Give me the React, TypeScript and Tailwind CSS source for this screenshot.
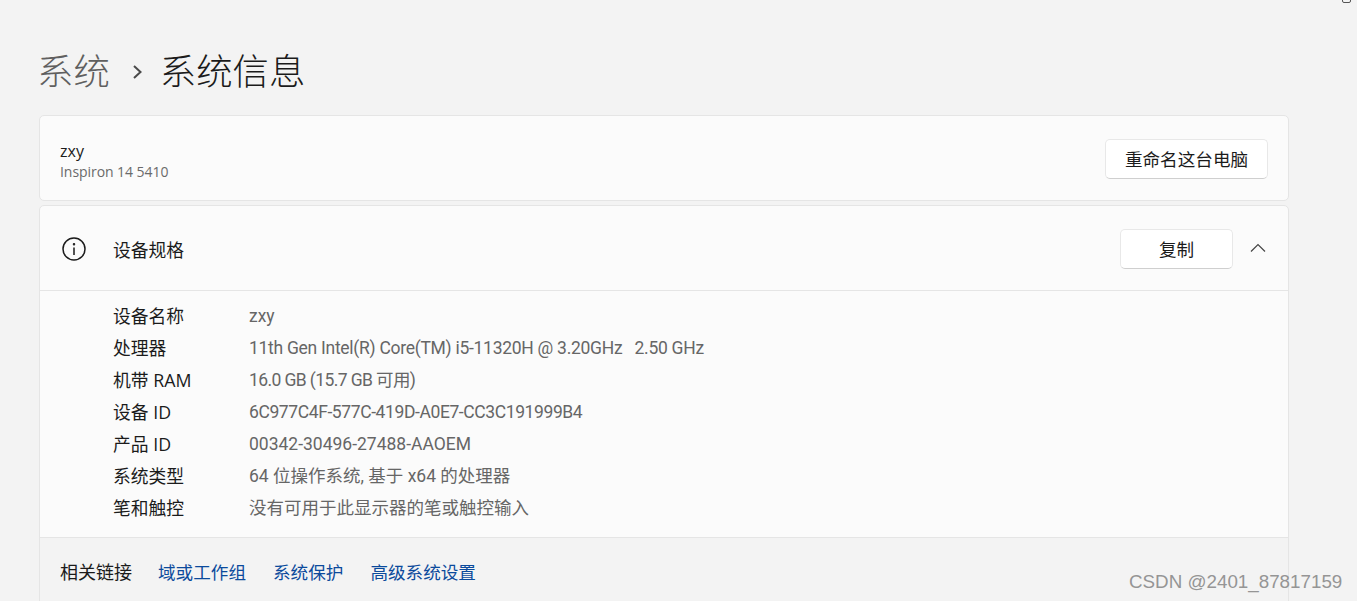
const font = '[font-family:"Open_Sans","Noto_Sans_CJK_SC",sans-serif]'
const valueFont = '[font-family:"Roboto","Noto_Sans_CJK_SC",sans-serif]'

const specs = [
  { label: '设备名称', value: 'zxy', tracking: 'tracking-normal' },
  { label: '处理器', value: '11th Gen Intel(R) Core(TM) i5-11320H @ 3.20GHz\u00a0\u00a0\u00a02.50 GHz', tracking: 'tracking-[-0.28px]' },
  { label: '机带 RAM', value: '16.0 GB (15.7 GB 可用)', tracking: 'tracking-[-0.6px]' },
  { label: '设备 ID', value: '6C977C4F-577C-419D-A0E7-CC3C191999B4', tracking: 'tracking-[-0.4px]' },
  { label: '产品 ID', value: '00342-30496-27488-AAOEM', tracking: 'tracking-normal' },
  { label: '系统类型', value: '64 位操作系统, 基于 x64 的处理器', tracking: 'tracking-normal' },
  { label: '笔和触控', value: '没有可用于此显示器的笔或触控输入', tracking: 'tracking-normal' },
]

const links = ['域或工作组', '系统保护', '高级系统设置']

export default function App() {
  return (
    <div className={`relative h-[601px] w-[1357px] overflow-hidden bg-[#f3f3f3] pl-[39px] pr-[68px] pt-[44px] ${font}`}>
      <div className="absolute right-[6px] top-[-5px] h-[8px] w-[9px] rounded-[2px] border border-[#555]" />

      <div className="flex h-[52px] items-center pt-[2px] text-[36.4px] font-light leading-[52px]">
        <span className="ml-[-2px] text-[#5f5f5f]">系统</span>
        <svg width="12" height="16" viewBox="0 0 12 16" fill="none" stroke="#4a4a4a" strokeWidth="2" className="ml-[22px] mr-[16px] mt-[1px]">
          <path d="M2 2 8.5 8 2 14" />
        </svg>
        <span className="text-[#1b1b1b]">系统信息</span>
      </div>

      <div className="mt-[19px] flex h-[86px] items-center justify-between rounded-[5px] border border-[#e5e5e5] bg-[#fbfbfb] pl-[20px] pr-[20px]">
        <div className="pt-[6px]">
          <div className="text-[16px] leading-[21px] text-[#1b1b1b]">zxy</div>
          <div className="text-[14px] leading-[20px] tracking-[-0.06px] text-[#6a6a6a]">Inspiron 14 5410</div>
        </div>
        <button className="mt-[2px] h-[40px] w-[163px] rounded-[5px] border border-[#e8e8e8] border-b-[#cfcfcf] bg-white text-[17.6px] text-[#1b1b1b]">
          重命名这台电脑
        </button>
      </div>

      <div className="mt-[4px] overflow-hidden rounded-t-[5px] border border-[#e5e5e5] bg-[#fbfbfb]">
        <div className="flex h-[85px] items-center border-b border-[#e5e5e5] pl-[22px] pr-[22px]">
          <svg width="24" height="24" viewBox="0 0 24 24" fill="none" stroke="#1b1b1b" strokeWidth="1.5" className="mt-[2px]">
            <circle cx="12" cy="12" r="11" />
            <path d="M12 10.5v7.5" />
            <circle cx="12" cy="7.3" r="0.5" fill="#1b1b1b" />
          </svg>
          <span className="ml-[27px] mt-[2px] pt-[2px] text-[17.8px] text-[#1b1b1b]">设备规格</span>
          <button className="ml-auto mt-[2px] h-[40px] w-[113px] rounded-[5px] border border-[#e8e8e8] border-b-[#cfcfcf] bg-white text-[17.6px] text-[#1b1b1b]">
            复制
          </button>
          <svg width="16" height="10" viewBox="0 0 16 10" fill="none" stroke="#444" strokeWidth="1.2" className="mb-[1px] ml-[17px]">
            <path d="M1 8.5 8 1.5l7 7" />
          </svg>
        </div>

        <div className="flex flex-col pb-[13px] pl-[73px] pt-[9px]">
          {specs.map((spec) => (
            <div key={spec.label} className="flex h-[32px] items-center">
              <span className="w-[136px] text-[17.8px] text-[#1b1b1b]">{spec.label}</span>
              <span className={`text-[17.5px] text-[#666] ${valueFont} ${spec.tracking}`}>{spec.value}</span>
            </div>
          ))}
        </div>

        <div className="flex h-[70px] items-center border-t border-[#e5e5e5] bg-[#f3f3f3] pl-[20px]">
          <span className="text-[18px] text-[#1b1b1b]">相关链接</span>
          <div className="ml-[26px] flex gap-[27px]">
            {links.map((link) => (
              <a key={link} className="text-[17.6px] text-[#0b4a9c]">{link}</a>
            ))}
          </div>
        </div>
      </div>

      <div className="absolute left-[1129px] top-[571px] [font-family:'Liberation_Sans',sans-serif] text-[18.8px] leading-[22px] text-[#959595]">
        CSDN @2401_87817159
      </div>
    </div>
  )
}
